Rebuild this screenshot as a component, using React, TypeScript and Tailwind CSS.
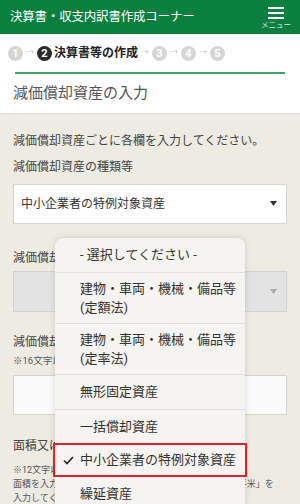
import React from "react";

const font = { fontFamily: "Roboto, 'Noto Sans CJK JP', 'Noto Sans', sans-serif" };

function Circle({ n, active }: { n: string; active?: boolean }) {
  return (
    <span
      className={
        "flex h-[15px] w-[15px] items-center justify-center rounded-full text-[11px] font-bold leading-none text-white " +
        (active ? "bg-[#2b2b2b]" : "bg-[#d6d6d6]")
      }
    >
      {n}
    </span>
  );
}

function Arrow() {
  return <span className="mx-[3px] text-[8px] leading-none text-[#c8c8c8]">→</span>;
}

export default function App() {
  return (
    <div style={font} className="relative h-[504px] w-[300px] overflow-hidden bg-[#eeebe2] text-[#333]">
      {/* header */}
      <div className="flex h-[34px] items-center justify-between bg-[#0b7f3e] pl-[10px] pr-[9px]">
        <span className="text-[12.5px] tracking-[-0.2px] text-white">決算書・収支内訳書作成コーナー</span>
        <div className="flex flex-col items-center pt-[3px]">
          <div className="flex w-[16px] flex-col gap-[3px]">
            <span className="block h-[2px] w-[16px] bg-white" />
            <span className="block h-[2px] w-[16px] bg-white" />
            <span className="block h-[2px] w-[16px] bg-white" />
          </div>
          <span className="mt-[3px] text-[7.5px] leading-none text-[#d8eadf]">メニュー</span>
        </div>
      </div>

      {/* white section */}
      <div className="border-b border-[#dcdcdc] bg-white">
        <div className="flex h-[38px] items-center pl-[8px]">
          <Circle n="1" />
          <Arrow />
          <Circle n="2" active />
          <span className="ml-[2px] text-[12px] font-bold text-[#222]">決算書等の作成</span>
          <Arrow />
          <Circle n="3" />
          <Arrow />
          <Circle n="4" />
          <Arrow />
          <Circle n="5" />
        </div>
        <div className="mx-[15px] h-[1.5px] bg-[#3fa468]" />
        <div className="flex h-[39px] items-center px-[13px] text-[15px] text-[#555]">減価償却資産の入力</div>
      </div>

      {/* beige content */}
      <div className="px-[13px] text-[12px] text-[#444]">
        <p className="mt-[18px] leading-[18px]">減価償却資産ごとに各欄を入力してください。</p>
        <p className="mt-[8px] leading-[18px]">減価償却資産の種類等</p>
        <div className="mt-[8px] flex h-[40px] items-center justify-between border border-[#d6d3cc] bg-white pl-[7px] pr-[9px] text-[12px] text-[#333]">
          <span>中小企業者の特例対象資産</span>
          <svg width="7" height="5" viewBox="0 0 7 5"><path d="M0 0h7L3.5 5z" fill="#333" /></svg>
        </div>
        <p className="mt-[25px] leading-[18px]">減価償却資産の種類</p>
        <div className="mt-[4px] flex h-[41px] items-center justify-end border border-[#d2d2d2] bg-[#e3e3e3] pr-[9px]">
          <svg width="7" height="5" viewBox="0 0 7 5"><path d="M0 0h7L3.5 5z" fill="#aaa" /></svg>
        </div>
        <p className="mt-[21px] leading-[18px]">減価償却資産の名称等</p>
        <p className="mt-[3px] text-[9.5px] leading-[14px] text-[#555]">※16文字以内で入力してください。</p>
        <div className="mt-[7px] h-[40px] border border-[#d6d3cc] bg-[#fafafa]" />
        <p className="mt-[22px] leading-[18px]">面積又は数量</p>
        <p className="mt-[8px] text-[9px] leading-[14px] text-[#555]">
          ※12文字以内で入力してください。
          <br />
          面積を入力する場合で、単位が平方メートルの場合は「平米」を
          <br />
          入力してください。
        </p>
      </div>

      {/* dropdown popup */}
      <div className="absolute left-[55px] top-[238px] w-[190px] rounded-t-[8px] bg-[#f6f4f0] text-[13px] text-[#333] shadow-[0_0_6px_rgba(0,0,0,0.15)]">
        <div className="flex h-[34px] items-center pl-[25px]">- 選択してください -</div>
        <div className="h-px bg-[#e2dfda]" />
        <div className="flex h-[50px] flex-col justify-center pl-[25px] leading-[19px]">
          <span>建物・車両・機械・備品等</span>
          <span>(定額法)</span>
        </div>
        <div className="h-px bg-[#e2dfda]" />
        <div className="flex h-[50px] flex-col justify-center pl-[25px] leading-[19px]">
          <span>建物・車両・機械・備品等</span>
          <span>(定率法)</span>
        </div>
        <div className="h-px bg-[#e2dfda]" />
        <div className="flex h-[34px] items-center pl-[25px]">無形固定資産</div>
        <div className="h-px bg-[#e2dfda]" />
        <div className="flex h-[33px] items-center pl-[25px]">一括償却資産</div>
        <div className="relative flex h-[34px] items-center pl-[8px]">
          <svg width="11" height="9" viewBox="0 0 11 9" className="mr-[6px]">
            <path d="M1 4.5l3 3L10 1" fill="none" stroke="#222" strokeWidth="1.6" />
          </svg>
          <span>中小企業者の特例対象資産</span>
          <div className="absolute -left-[2px] -right-[2px] top-0 bottom-0 border-2 border-[#e41e2b]" />
        </div>
        <div className="flex h-[34px] items-center pl-[25px]">繰延資産</div>
      </div>
    </div>
  );
}
